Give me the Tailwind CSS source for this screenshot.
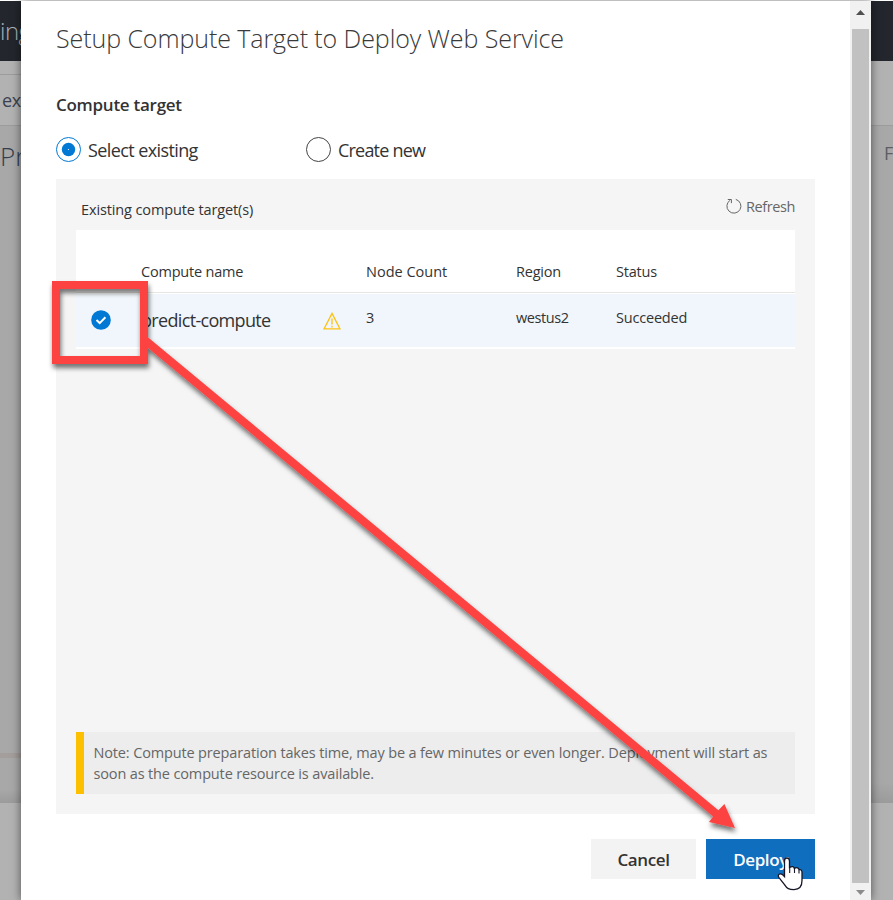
<!DOCTYPE html>
<html lang="en">
<head>
<meta charset="utf-8">
<title>Setup Compute Target</title>
<script src="https://cdn.jsdelivr.net/npm/@tailwindcss/browser@4"></script>
</head>
<body class="relative w-[893px] h-[900px] overflow-hidden bg-white font-['Open_Sans','Noto_Sans',sans-serif] text-[#333] pt-px">
<div class="flex h-[899px] w-full">
  <aside class="w-[21px] shrink-0 overflow-hidden whitespace-nowrap flex flex-col bg-[#a8a8a8]">
    <div class="h-[60px] shrink-0 bg-[#23272d] text-[#a9b0b8] text-[24px] leading-[60px] font-light tracking-[-0.5px]">ing</div>
    <div class="h-[13px] shrink-0 bg-[#b2b2b2]"></div>
    <div class="h-[52px] shrink-0 bg-[#b2b2b2] border-y border-[#9c9c9c] text-[#3c4250] text-[18px] leading-[50px] pl-[2px] tracking-[-0.3px]">exp</div>
    <div class="h-[627px] shrink-0 text-[#353e4e] text-[26px] font-light leading-[60px]">Pre</div>
    <div class="h-[5px] shrink-0 bg-[#a39d9b]"></div>
    <div class="h-[45px] shrink-0 bg-linear-to-b from-[#a8a8a8] from-70% to-[#9b9b9b]"></div>
    <div class="grow bg-[#b2b2b2]"></div>
  </aside>

  <main class="relative z-10 w-[850px] shrink-0 flex bg-white shadow-[0_0_9px_rgba(0,0,0,0.55)]">
    <section class="w-[829px] pl-[35px] pr-[35px] flex flex-col">
      <h1 class="h-[76px] leading-[75px] text-[25px] font-light text-[#3a3a3a] whitespace-nowrap tracking-[-0.08px]">Setup Compute Target to Deploy Web Service</h1>
      <h2 class="h-[55px] leading-[56px] text-[17px] font-semibold text-[#333] whitespace-nowrap tracking-[-0.27px]">Compute target</h2>
      <div class="h-[46px] flex pt-[5px]">
        <label class="w-[250px] flex h-[26px] gap-[7px]">
          <svg class="w-[25px] h-[25px] shrink-0" viewBox="0 0 25 25"><circle cx="12.5" cy="12.5" r="12" fill="#fff" stroke="#0078d4"/><circle cx="12.5" cy="12.5" r="6.7" fill="#0078d4"/><circle cx="12.5" cy="12.5" r=".6" fill="#fff"/></svg>
          <span class="leading-[27px] text-[18px] tracking-[-0.6px] whitespace-nowrap">Select existing</span>
        </label>
        <label class="flex h-[26px] gap-[7px]">
          <svg class="w-[25px] h-[25px] shrink-0" viewBox="0 0 25 25"><circle cx="12.5" cy="12.5" r="12" fill="#fff" stroke="#444"/></svg>
          <span class="leading-[27px] text-[18px] tracking-[-0.8px] whitespace-nowrap">Create new</span>
        </label>
      </div>
      <div class="mt-px h-[635px] shrink-0 bg-[#f5f5f5] px-[20px] pb-[20px] flex flex-col">
        <div class="h-[51px] shrink-0 flex justify-between pl-[5px] text-[14.5px] tracking-[-0.3px] whitespace-nowrap">
          <span class="leading-[61px] tracking-[-0.12px]">Existing compute target(s)</span>
          <span class="flex text-[#666] leading-[55px]">
            <svg class="w-[16px] h-[16px] mt-[19px] mr-[4px]" viewBox="0 0 16 16" fill="none" stroke="#666" stroke-width="1"><path d="M9.8 1.4A7 7 0 1 1 4.2 2.2M1.8 1.5H5.4V5.1"/></svg><span class="tracking-[-0.4px]">Refresh</span></span>
        </div>
        <div class="bg-white h-[119px] shrink-0 text-[14.5px] tracking-[-0.2px] whitespace-nowrap">
          <div class="grid grid-cols-[65px_225px_150px_100px_1fr] h-[63px] border-b border-[#e6e6e3] leading-[83px]">
            <span></span><span>Compute name</span><span class="tracking-[0px]">Node Count</span><span>Region</span><span>Status</span>
          </div>
          <div class="mt-px grid grid-cols-[65px_225px_150px_100px_1fr] h-[53px] bg-[#f0f6fb] leading-[48px]">
            <span><svg class="ml-[15px] mt-[15.5px] w-[20px] h-[20px]" viewBox="0 0 20 20"><circle cx="10" cy="10" r="9.8" fill="#0078d4"/><path d="M5.500 10.100 8.700 13.100 14.400 7.300" fill="none" stroke="#fff" stroke-width="2"/></svg></span>
            <span class="flex justify-between pr-[25px]"><b class="font-normal text-[18px] leading-[53px] tracking-[-0.67px]">predict-compute</b>
              <svg class="w-[18px] h-[18px] mt-[18px]" viewBox="0 0 18 18" fill="none" stroke="#fcc212" stroke-width="1.3"><path d="M9 1.4 17 16.9H1ZM9 6.5V12.5M9 13.8V15.4"/></svg></span>
            <span>3</span><span class="tracking-[-0.4px]">westus2</span><span>Succeeded</span>
          </div>
        </div>
        <div class="grow"></div>
        <div class="h-[62px] shrink-0 bg-[#ededed] border-l-8 border-[#fcc000] pl-[9.5px] pt-[10px] text-[14.5px] leading-[21px] tracking-[-0.145px] text-[#666] whitespace-nowrap">Note: Compute preparation takes time, may be a few minutes or even longer. Deployment will start as<br>soon as the compute resource is available.</div>
      </div>
      <div class="mt-[25px] flex justify-end gap-[10px] h-[40px] text-[17px] font-semibold leading-[42px] text-center tracking-[-0.4px]">
        <button class="w-[105px] h-[40px] bg-[#f3f3f3]">Cancel</button>
        <button class="w-[109px] h-[40px] bg-[#106ebe] text-white">Deploy</button>
      </div>
    </section>
    <div class="w-[21px] bg-[#f1f1f1] flex flex-col items-center">
      <svg class="h-[28px] w-[21px] shrink-0" viewBox="0 0 21 28"><path d="M6 14 10.5 9 15 14Z" fill="#505050"/></svg>
      <div class="w-[17px] grow bg-[#c1c1c1]"></div>
      <svg class="h-[17px] w-[21px] shrink-0" viewBox="0 0 21 17"><path d="M6 7 10.5 12 15 7Z" fill="#8b8b8b"/></svg>
    </div>
  </main>

  <aside class="grow overflow-hidden flex flex-col bg-[#a8a8a8]">
    <div class="h-[60px] shrink-0 bg-[#23272d]"></div>
    <div class="h-[65px] shrink-0 bg-[#b2b2b2] border-b border-[#9c9c9c]"></div>
    <div class="h-[677px] shrink-0 pl-[13px] text-[18px] leading-[54px] text-[#5b5e62] bg-linear-to-b from-[#a8a8a8] from-97% to-[#9b9b9b]">F</div>
    <div class="grow bg-[#b2b2b2]"></div>
  </aside>
</div>

<svg class="absolute inset-0 z-20 pointer-events-none" width="893" height="900" viewBox="0 0 893 900">
  <defs><filter id="s" x="-30%" y="-30%" width="160%" height="160%"><feDropShadow dx="1" dy="4" stdDeviation="2.5" flood-color="#000" flood-opacity=".55"/></filter></defs>
  <g filter="url(#s)">
    <rect x="56" y="285" width="88" height="75" fill="none" stroke="#fd4343" stroke-width="8"/>
    <path d="M147 336.500 718.400 810.200 724.400 804 735 828 709 822 713.200 816.400 142 343Z" fill="#fd4343"/>
  </g>
  <path d="M786 861q0-3 2.400-3t2.600 3v6.500q4-2 4.800.8 4-1.700 4.800 1.300 2.900-.5 2.900 3v8c0 6-3 9-8 9-5 0-7-1-9.500-5l-5.500-7c-2-3 1-5 4-2.500l1.500 1.500Z" transform="translate(-1.500 0)" fill="#fff" stroke="#161628" stroke-width="1.300"/>
  <path d="M789.700 867v6M794.500 868v5M799 869.500v4" stroke="#161628" stroke-width="1.100"/>
</svg>
</body>
</html>
